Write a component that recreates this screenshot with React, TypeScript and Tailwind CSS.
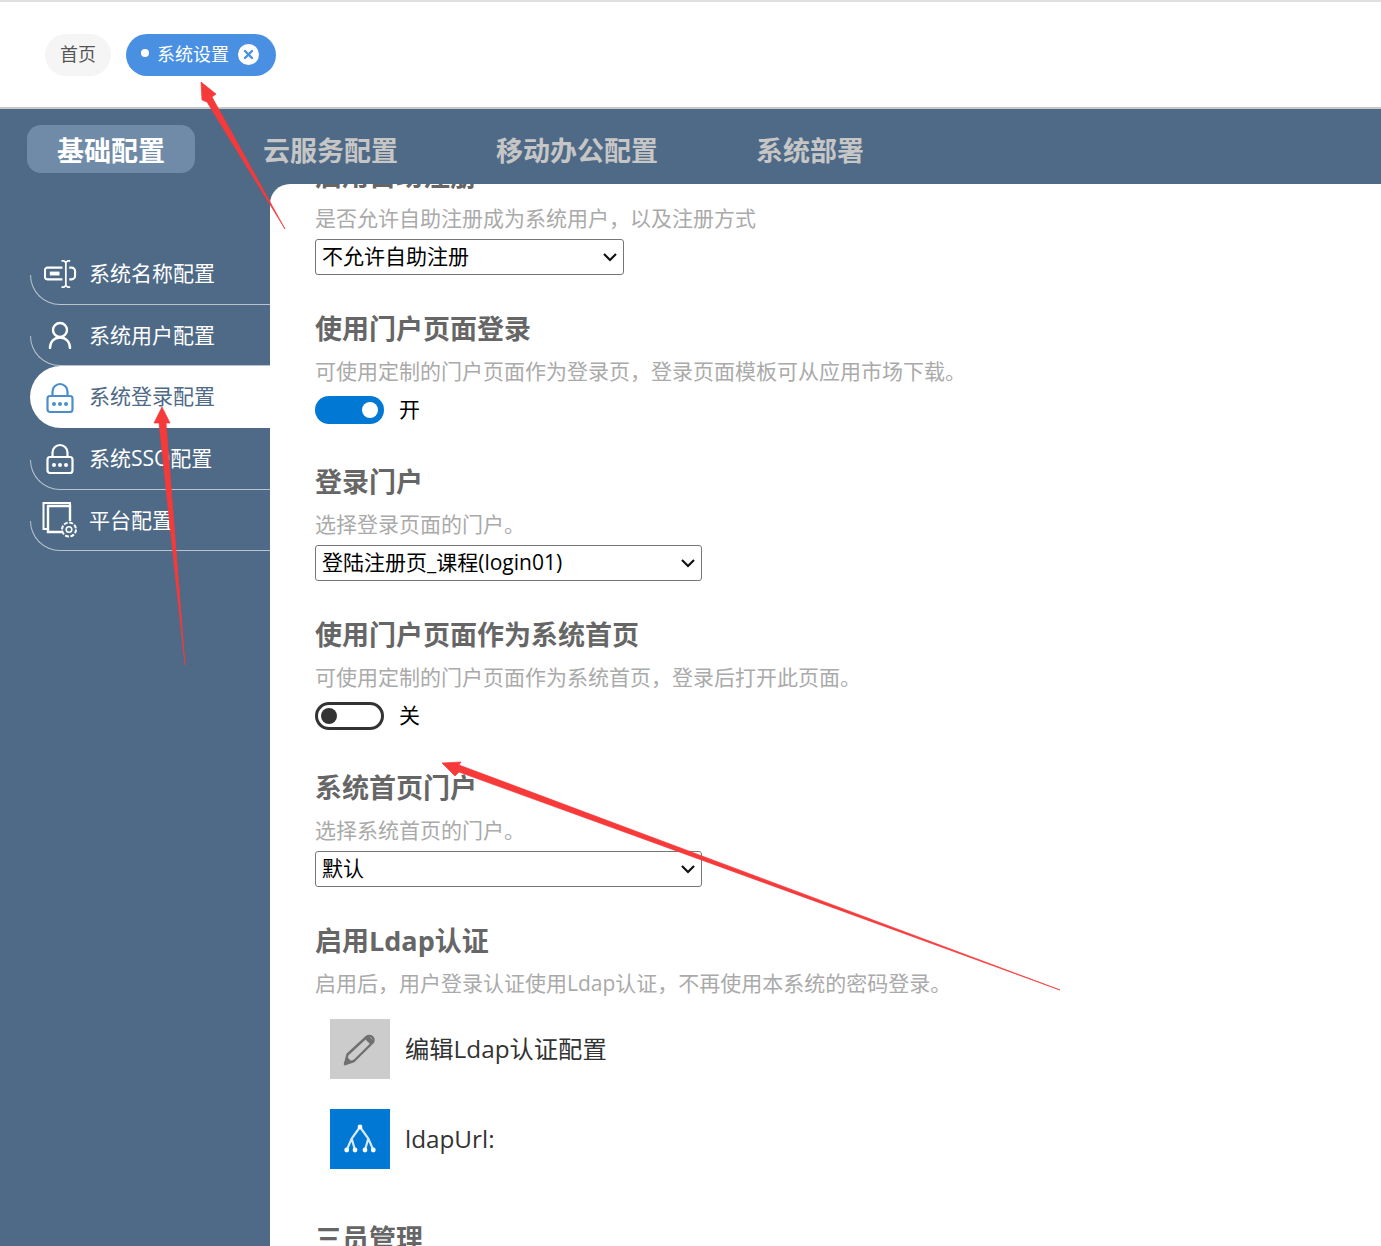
const fontStack = "font-['Open_Sans','Noto_Sans_CJK_SC',sans-serif]";

function NameIcon() {
  return (
    <svg width="33" height="30" viewBox="0 0 34 30" fill="none" stroke="currentColor" strokeWidth="2.200" className="shrink-0">
      <path d="M19 8.500H3.500a2.500 2.500 0 0 0-2.500 2.500v7a2.500 2.500 0 0 0 2.500 2.500H19" />
      <path d="M26 8.500h2.500a3.500 3.500 0 0 1 3.500 3.500v5a3.500 3.500 0 0 1-3.500 3.500H26" />
      <path d="M22.500 2.500v25M18 1.500h2.500l2 1.500 2-1.500H27M18 28.500h2.500l2-1.500 2 1.500H27" strokeWidth="1.800" />
      <rect x="6" y="12.500" width="10" height="4" fill="currentColor" stroke="none" />
    </svg>
  );
}

function UserIcon() {
  return (
    <svg width="24" height="28" viewBox="0 0 24 28" fill="none" stroke="currentColor" strokeWidth="2.400" className="shrink-0">
      <circle cx="12" cy="9" r="7" />
      <path d="M2 27c0-6 4-10.500 10-10.500S22 21 22 27" strokeLinecap="round" />
    </svg>
  );
}

function LockIcon({ className }: { className?: string }) {
  return (
    <svg width="28" height="31" viewBox="0 0 28 31" fill="none" stroke="currentColor" strokeWidth="2.200" className={`shrink-0 ${className ?? ""}`}>
      <path d="M6.500 14V9.500a7.500 7.500 0 0 1 15 0V14" />
      <rect x="1.500" y="14" width="25" height="16" rx="2.500" />
      <circle cx="8" cy="22" r="2" fill="currentColor" stroke="none" />
      <circle cx="14" cy="22" r="2" fill="currentColor" stroke="none" />
      <circle cx="20" cy="22" r="2" fill="currentColor" stroke="none" />
    </svg>
  );
}

function PlatformIcon() {
  return (
    <svg width="36" height="36" viewBox="0 0 36 36" fill="none" stroke="currentColor" className="shrink-0">
      <path d="M28 3V1H1.500v26H6" strokeWidth="2" />
      <path d="M28 19V4H6v26h15" strokeWidth="2.400" />
      <circle cx="27" cy="27.500" r="7" strokeWidth="2" strokeDasharray="4 1.500" />
      <circle cx="27" cy="27.500" r="2.800" strokeWidth="1.600" />
    </svg>
  );
}

const menu = [
  { label: "系统名称配置", icon: <NameIcon />, pad: "pl-[14px] gap-[12px]" },
  { label: "系统用户配置", icon: <UserIcon />, pad: "pl-[18px] gap-[17px]" },
  { label: "系统登录配置", icon: <LockIcon className="text-[#4a8fc9]" />, pad: "pl-[16px] gap-[15px]", active: true },
  { label: "系统SSO配置", icon: <LockIcon />, pad: "pl-[16px] gap-[15px]" },
  { label: "平台配置", icon: <PlatformIcon />, pad: "pl-[12px] gap-[11px]" },
];

function SideMenu() {
  return (
    <div className="w-[270px] shrink-0 pl-[30px] pt-[59px]">
      {menu.map((item) =>
        item.active ? (
          <div
            key={item.label}
            className={`flex h-[62px] items-center rounded-l-[31px] bg-white text-[21px] text-[#4e6a87] ${item.pad}`}
          >
            {item.icon}
            <span>{item.label}</span>
          </div>
        ) : (
          <div
            key={item.label}
            className={`relative flex h-[61.500px] items-center text-[21px] text-white before:absolute before:bottom-0 before:left-0 before:h-[30px] before:w-[30px] before:rounded-bl-[30px] before:border-b before:border-l before:border-[#b9c4cf] before:content-[''] after:absolute after:right-0 after:bottom-0 after:left-[30px] after:h-px after:bg-[#b9c4cf] after:content-[''] ${item.pad}`}
          >
            {item.icon}
            <span>{item.label}</span>
          </div>
        ),
      )}
    </div>
  );
}

function Section({ title, desc, children }: { title: string; desc: string; children?: React.ReactNode }) {
  return (
    <div className="h-[153px]">
      <h3 className="h-[40px] text-[27px] leading-[40px] font-bold text-[#666666]">{title}</h3>
      <p className="mt-[7px] h-[30px] text-[21px] leading-[30px] text-[#aaaaaa]">{desc}</p>
      {children}
    </div>
  );
}

function FakeSelect({ value, width }: { value: string; width: string }) {
  return (
    <div className={`mt-[6px] flex h-[36px] items-center justify-between rounded-[3px] border border-[#767676] pr-[5px] pl-[6px] text-[21px] text-black ${width}`}>
      <span>{value}</span>
      <svg width="16" height="16" viewBox="0 0 16 16" fill="none" stroke="#111" strokeWidth="2.200">
        <path d="M2 5l6 6 6-6" />
      </svg>
    </div>
  );
}

function Toggle({ on }: { on: boolean }) {
  return (
    <div className="mt-[8px] flex items-center gap-[15px]">
      {on ? (
        <div className="flex h-[28px] w-[69px] items-center justify-end rounded-full bg-[#0078d4] pr-[6px]">
          <div className="h-[16px] w-[16px] rounded-full bg-white" />
        </div>
      ) : (
        <div className="flex h-[28px] w-[69px] items-center rounded-full border-[3px] border-[#333333] pl-[3px]">
          <div className="h-[16px] w-[16px] rounded-full bg-[#333333]" />
        </div>
      )}
      <span className="text-[21px] text-black">{on ? "开" : "关"}</span>
    </div>
  );
}

function Arrows() {
  return (
    <svg width="1381" height="1246" viewBox="0 0 1381 1246" className="pointer-events-none absolute top-0 left-0" fill="#f63a3a" stroke="#f63a3a" strokeWidth="0.700">
      <polygon points="201,82 216,94 212,97 285,229 207,102 202,100" />
      <polygon points="162,407 170,423 166,423 185,665 159,423 154,423" />
      <polygon points="442,763 461,762 459,765 1060,990 459,772 455,776" />
    </svg>
  );
}

export default function App() {
  return (
    <div className={`relative h-[1246px] w-full overflow-hidden bg-[#4e6a87] ${fontStack}`}>
      {/* Top tag bar */}
      <div className="flex h-[109px] items-center gap-[15px] border-t-2 border-b-2 border-t-[#e0e0e0] border-b-[#c8c8c8] bg-white pl-[45px]">
        <div className="flex h-[42px] w-[66px] items-center justify-center rounded-full bg-[#f5f5f5] text-[18px] text-[#555555]">首页</div>
        <div className="flex h-[42px] w-[150px] items-center rounded-full bg-[#4a90e2] pl-[15px] text-[18px] text-white">
          <span className="mb-[4px] h-[8px] w-[8px] rounded-full bg-white" />
          <span className="ml-[8px]">系统设置</span>
          <svg width="21" height="21" viewBox="0 0 21 21" className="ml-[9px]">
            <circle cx="10.500" cy="10.500" r="10.500" fill="#fff" />
            <path d="M7 7l7 7M14 7l-7 7" stroke="#4a90e2" strokeWidth="2.400" strokeLinecap="round" />
          </svg>
        </div>
      </div>

      {/* Top tabs */}
      <div className="flex h-[75px] items-start gap-[38px] pt-[16px] pl-[27px]">
        <div className="flex h-[48px] items-center rounded-[14px] bg-[#6f8ba8] pt-[4px] pr-[30px] pl-[30px] text-[27px] font-bold text-white">基础配置</div>
        <div className="flex h-[48px] items-center pt-[4px] pr-[30px] pl-[30px] text-[27px] font-bold text-[#c6c6c6]">云服务配置</div>
        <div className="flex h-[48px] items-center pt-[4px] pr-[30px] pl-[30px] text-[27px] font-bold text-[#c6c6c6]">移动办公配置</div>
        <div className="flex h-[48px] items-center pt-[4px] pr-[30px] pl-[30px] text-[27px] font-bold text-[#c6c6c6]">系统部署</div>
      </div>

      <div className="flex h-[1062px]">
        <SideMenu />

        {/* Settings panel */}
        <div className="flex-1 overflow-hidden rounded-tl-[20px] bg-white pl-[45px]">
          <div className="mt-[-28px]">
            <Section title="启用自助注册" desc="是否允许自助注册成为系统用户，以及注册方式">
              <FakeSelect value="不允许自助注册" width="w-[309px]" />
            </Section>
            <Section title="使用门户页面登录" desc="可使用定制的门户页面作为登录页，登录页面模板可从应用市场下载。">
              <Toggle on />
            </Section>
            <Section title="登录门户" desc="选择登录页面的门户。">
              <FakeSelect value="登陆注册页_课程(login01)" width="w-[387px]" />
            </Section>
            <Section title="使用门户页面作为系统首页" desc="可使用定制的门户页面作为系统首页，登录后打开此页面。">
              <Toggle on={false} />
            </Section>
            <Section title="系统首页门户" desc="选择系统首页的门户。">
              <FakeSelect value="默认" width="w-[387px]" />
            </Section>
            <div className="h-[298px]">
              <h3 className="h-[40px] text-[27px] leading-[40px] font-bold text-[#666666]">启用Ldap认证</h3>
              <p className="mt-[7px] h-[30px] text-[21px] leading-[30px] text-[#aaaaaa]">启用后，用户登录认证使用Ldap认证，不再使用本系统的密码登录。</p>
              <div className="mt-[21px] flex flex-col gap-[30px] pl-[15px]">
                <div className="flex items-center gap-[15px]">
                  <div className="h-[60px] w-[60px] bg-[#cccccc]">
                    <svg width="60" height="60" viewBox="0 0 60 60" fill="none" stroke="#707070" strokeWidth="2.400" strokeLinejoin="round">
                      <path d="M15 45l2.500-9.500L36.500 18c1.700-1.500 4.500-1.500 6 .2s1.300 4.300-.3 5.800L24 42z" />
                      <path d="M37 18.500l5.500 5.500" strokeWidth="5" />
                      <path d="M15 45l2.500-5 2.500 2.500z" fill="#707070" />
                    </svg>
                  </div>
                  <span className="text-[24.300px] text-[#333333]">编辑Ldap认证配置</span>
                </div>
                <div className="flex items-center gap-[15px]">
                  <div className="h-[60px] w-[60px] bg-[#0078d4]">
                    <svg width="60" height="60" viewBox="0 0 60 60" fill="none" stroke="#d8e9f7" strokeWidth="2.200">
                      <path d="M30 18L21.700 29.500 16.700 41M21.700 29.500L25 41M30 18l8.300 11.500L43.300 41M38.300 29.500L35 41" />
                      <circle cx="30" cy="18" r="2.400" fill="#fff" stroke="none" />
                      <circle cx="16.700" cy="41" r="2.400" fill="#fff" stroke="none" />
                      <circle cx="25" cy="41" r="2.400" fill="#fff" stroke="none" />
                      <circle cx="35" cy="41" r="2.400" fill="#fff" stroke="none" />
                      <circle cx="43.300" cy="41" r="2.400" fill="#fff" stroke="none" />
                    </svg>
                  </div>
                  <span className="text-[24.300px] text-[#333333]">ldapUrl:</span>
                </div>
              </div>
            </div>
            <h3 className="h-[40px] text-[27px] leading-[40px] font-bold text-[#666666]">三员管理</h3>
          </div>
        </div>
      </div>

      <Arrows />
    </div>
  );
}
